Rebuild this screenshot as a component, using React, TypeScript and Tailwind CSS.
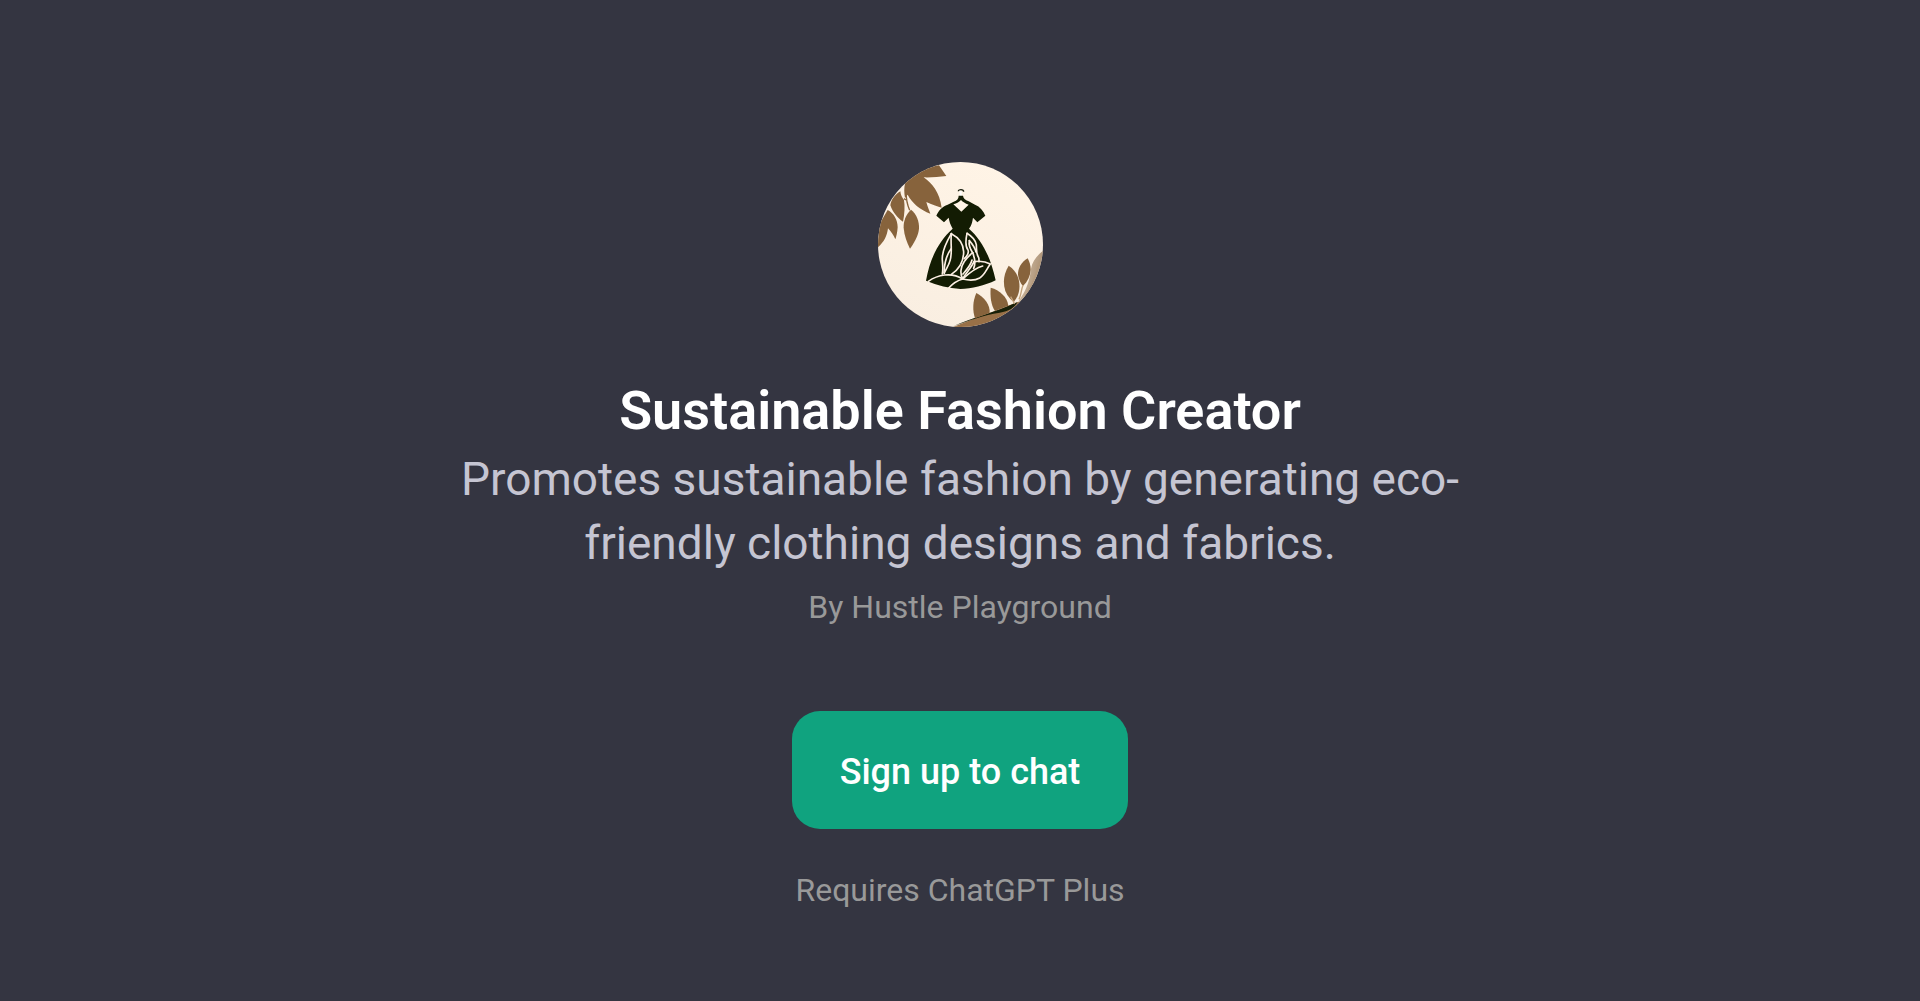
function DressLogo() {
  return (
    <svg
      className="size-[165px] shrink-0"
      viewBox="23 20 495 495"
      role="img"
      aria-label="Dress with leaves"
    >
      <defs>
        <clipPath id="disc">
          <circle cx="270.5" cy="267.5" r="247.5" />
        </clipPath>
        <linearGradient id="cream" x1="0.7" y1="0" x2="0.3" y2="1">
          <stop offset="0" stopColor="#fff4e6" />
          <stop offset="1" stopColor="#f9eee1" />
        </linearGradient>
        <linearGradient id="shade" x1="0" y1="0" x2="1" y2="0.4">
          <stop offset="0" stopColor="#e9d8c3" />
          <stop offset="1" stopColor="#a58a6d" />
        </linearGradient>
      </defs>
      <g clipPath="url(#disc)">
        <rect x="20" y="18" width="502" height="502" fill="url(#cream)" />
        <path d="M520 285C500 300 486 318 482 340C479 376 466 404 456 420L440 446L424 478L520 480Z" fill="url(#shade)" />
        <path d="M506 322C498 364 480 404 454 438" fill="none" stroke="#b59a7b" strokeWidth="4" />

        <g fill="#87633c">
          <path d="M96 82L150 40L206 30L228 62C206 64 182 67 160 66C186 84 208 112 214 157C202 154 188 149 168 140C171 152 176 164 180 175C150 164 124 142 112 118L104 128C101 112 101 96 104 86Z" />
          <path d="M90 108C74 118 62 134 60 150C68 172 82 188 98 199C103 176 104 152 101 134C95 127 91 118 90 108Z" />
          <path d="M122 163C106 178 99 198 100 218C102 242 110 262 119 280C130 264 144 242 146 220C147 198 139 176 122 163Z" />
          <path d="M20 278L28 205L52 164C70 174 82 192 82 216C81 232 78 244 75 252C70 240 62 229 53 219C50 244 40 262 20 278Z" />
        </g>
        <path d="M108 112C107 130 111 148 118 165M107 134L101 130" fill="none" stroke="#87633c" strokeWidth="4" />

        <path d="M238 520C270 505 310 490 352 475L436 442L470 436L440 490L330 540Z" fill="#987047" />
        <path d="M250 512C300 489 372 472 442 440C430 459 416 468 388 472C340 478 298 496 250 512Z" fill="#172008" />
        <g fill="#87633c">
          <path d="M318 413C306 440 307 468 314 489L358 473C360 448 342 426 318 413Z" />
          <path d="M361 397C359 423 362 449 374 467L414 451C411 425 388 404 361 397Z" />
          <path d="M415 331C400 355 397 381 405 407C412 423 420 433 431 439C446 421 450 399 446 377C441 355 431 341 415 331Z" />
          <path d="M472 309C453 320 442 340 443 358C445 372 450 383 458 392C472 378 480 361 481 343C481 329 477 318 472 309Z" />
        </g>
        <path d="M458 390C452 404 453 418 446 432M421 424L433 446" fill="none" stroke="#c4a37b" strokeWidth="4" />

        <path d="M264 108C264 101 280 101 280 109" fill="none" stroke="#1b2112" strokeWidth="4" />
        <path d="M271 108V122" fill="none" stroke="#ffffff" strokeWidth="6" />
        <path
          d="M265 121H278C279 129 284 134 295 138L314 148C329 154 339 166 345 181L321 201L308 187C306 201 303 211 296 220C334 254 360 302 376 375C343 391 304 400 270 401C236 398 202 391 167 376C178 314 202 260 247 220C240 208 237 198 235 187L221 201L198 181C204 166 216 153 232 148L250 139C260 135 265 130 265 121Z"
          fill="#131c03"
        />
        <path d="M249 147C260 144 267 139 272 134C278 140 284 144 295 148L273 169Z" fill="#fff4e6" />

        <g fill="none" stroke="#fcefe3" strokeWidth="5" strokeLinecap="round" strokeLinejoin="round">
          <path d="M243 235C264 246 279 264 280 289C280 319 266 342 243 357" />
          <path d="M243 235C226 264 214 288 216 314C217 330 219 341 216 356" />
          <path d="M243 235C240 267 247 292 239 316C235 332 226 342 222 354" />
          <path d="M242 281C227 301 222 325 221 352" />
          <path d="M290 234C303 242 315 253 318 268C319 282 317 292 323 303C327 309 326 314 326 319" />
          <path d="M290 234C286 253 284 273 293 284C297 294 288 304 282 310" />
          <path d="M297 256C305 265 314 278 317 290" />
          <path d="M297 256C294 271 300 282 307 292" />
          <path d="M307 292C290 306 273 325 272 345C271 356 273 364 277 371" />
          <path d="M307 292C314 310 316 326 310 339" />
          <path d="M305 314C302 329 290 342 278 356" />
          <path d="M311 319C329 316 345 318 360 326C348 342 344 358 328 368C312 377 293 375 277 371" />
          <path d="M311 319C304 336 288 350 277 371" />
          <path d="M337 332C316 337 301 349 278 370" />
          <path d="M174 378C201 359 243 349 277 371C259 376 246 386 235 398" />
        </g>
      </g>
    </svg>
  );
}

export default function App() {
  return (
    <main className="flex min-h-screen flex-col items-center bg-[#343541] px-6 pt-[162px] pb-12 text-center font-[Roboto,sans-serif]">
      <DressLogo />
      <h1 className="mt-12 text-[54px] leading-[72px] font-semibold text-white">
        Sustainable Fashion Creator
      </h1>
      <p className="max-w-5xl text-[46px] leading-[64px] text-[#c5c5d2]">
        Promotes sustainable fashion by generating eco-friendly clothing designs and fabrics.
      </p>
      <p className="text-[32px] leading-[64px] text-[#999999]">By Hustle Playground</p>
      <button
        type="button"
        className="mt-[72px] rounded-[28px] bg-[#10a37f] px-12 pt-[34px] pb-[30px] text-4xl leading-[54px] font-medium text-white"
      >
        Sign up to chat
      </button>
      <p className="mt-[37px] text-[32px] leading-[48px] text-[#999999]">Requires ChatGPT Plus</p>
    </main>
  );
}
